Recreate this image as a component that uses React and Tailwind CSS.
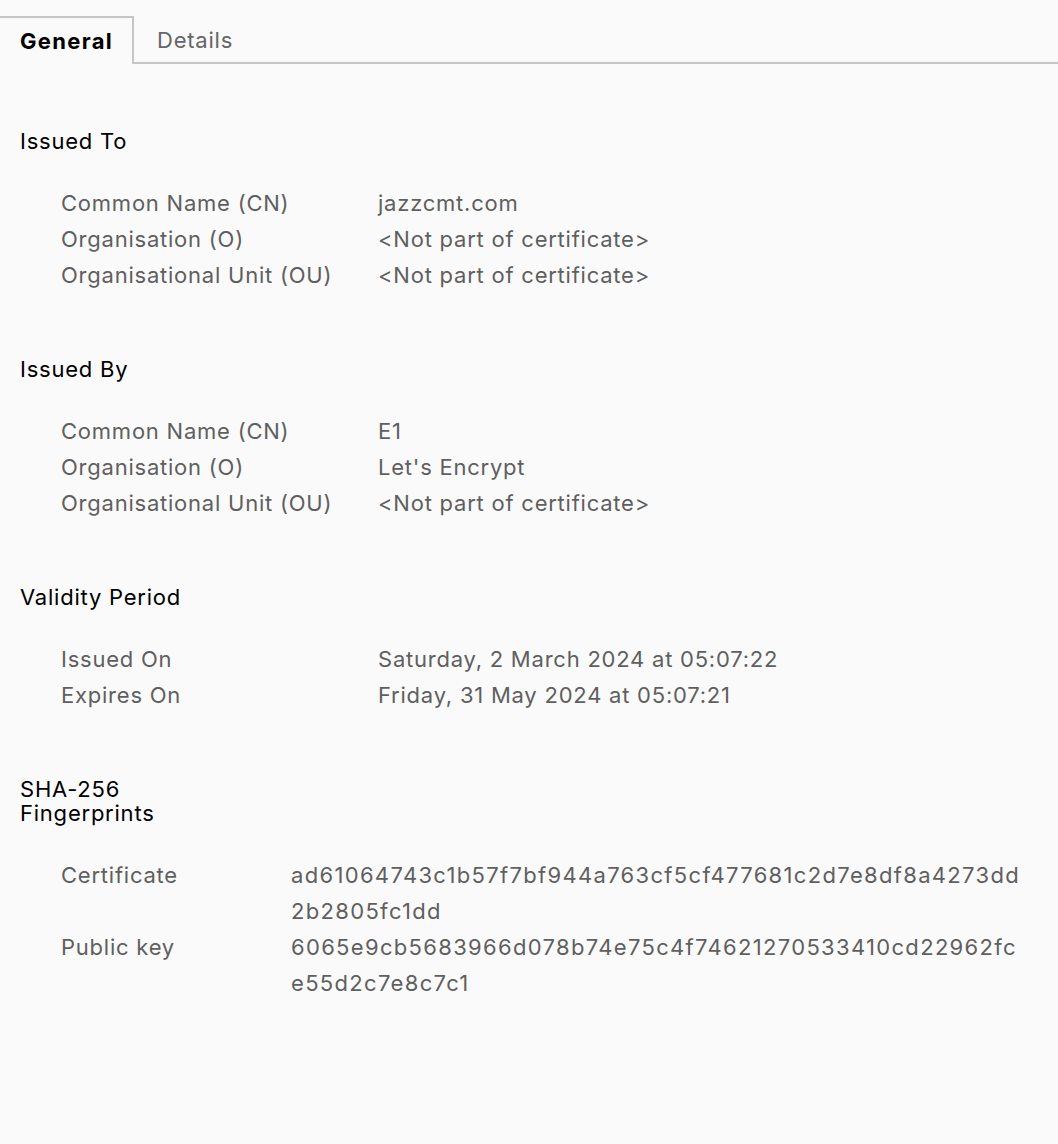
import React from "react";

const sections = [
  {
    title: "Issued To",
    rows: [
      ["Common Name (CN)", "jazzcmt.com"],
      ["Organisation (O)", "<Not part of certificate>"],
      ["Organisational Unit (OU)", "<Not part of certificate>"],
    ],
  },
  {
    title: "Issued By",
    rows: [
      ["Common Name (CN)", "E1"],
      ["Organisation (O)", "Let's Encrypt"],
      ["Organisational Unit (OU)", "<Not part of certificate>"],
    ],
  },
  {
    title: "Validity Period",
    rows: [
      ["Issued On", "Saturday, 2 March 2024 at 05:07:22"],
      ["Expires On", "Friday, 31 May 2024 at 05:07:21"],
    ],
  },
];

// split where the reference wraps
const fingerprints = [
  ["Certificate", ["ad61064743c1b57f7bf944a763cf5cf477681c2d7e8df8a4273dd", "2b2805fc1dd"]],
  ["Public key", ["6065e9cb5683966d078b74e75c4f74621270533410cd22962fc", "e55d2c7e8c7c1"]],
];

function Section({ title, rows }) {
  return (
    <div className="mb-[64px]">
      <div className="text-black leading-6">{title}</div>
      <div className="mt-[32px] pl-[41px] grid grid-cols-[317px_1fr] leading-9 text-[#5f5f5f]">
        {rows.map(([k, v]) => (
          <React.Fragment key={k}>
            <div className="whitespace-nowrap">{k}</div>
            <div className="whitespace-nowrap">{v}</div>
          </React.Fragment>
        ))}
      </div>
    </div>
  );
}

export default function App() {
  return (
    <div
      className="min-h-[1144px] bg-[#fafafa] text-[22px] tracking-[0.035em]"
      style={{ fontFamily: "Inter, 'Noto Sans', sans-serif" }}
    >
      <div className="pt-4 flex">
        <div className="h-[48px] w-[134px] border-t-2 border-r-2 border-[#c6c6c6] flex items-center pl-5 font-bold text-black tracking-[0.06em]">
          General
        </div>
        <div className="flex-1 border-b-2 border-[#c6c6c6] flex items-center pt-[2px] pl-[23px] text-[#666]">
          Details
        </div>
      </div>
      <div className="px-5 pt-[65px]">
        {sections.map((s) => (
          <Section key={s.title} {...s} />
        ))}
        <div>
          <div className="text-black leading-6 w-[160px]">SHA-256 Fingerprints</div>
          <div className="mt-[32px] pl-[41px] grid grid-cols-[230px_1fr] leading-9 text-[#5f5f5f]">
            {fingerprints.map(([k, v]) => (
              <React.Fragment key={k}>
                <div>{k}</div>
                <div className="tracking-[0.06em] whitespace-nowrap">
                  {v.map((line) => (
                    <div key={line}>{line}</div>
                  ))}
                </div>
              </React.Fragment>
            ))}
          </div>
        </div>
      </div>
    </div>
  );
}
